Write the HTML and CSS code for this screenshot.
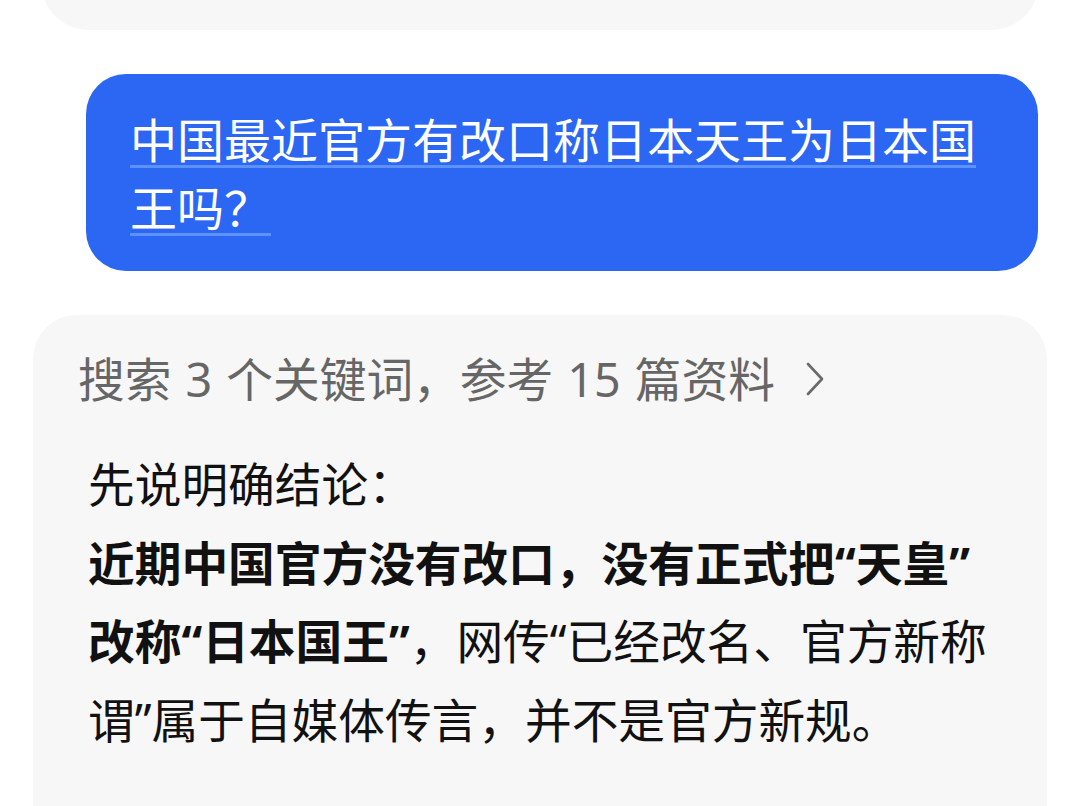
FILE: index.html
```html
<!DOCTYPE html>
<html lang="zh-CN">
<head>
<meta charset="utf-8">
<title>对话</title>
<link rel="stylesheet" href="styles.css">
</head>
<body>
<div class="chat">
  <div class="prev-card"></div>
  <div class="user-row">
    <div class="bubble"><span class="q">中国最近官方有改口称日本天王为日本国王吗？</span></div>
  </div>
  <div class="answer-card">
    <div class="search-row">
      <span class="search-text">搜索 3 个关键词，参考 15 篇资料</span>
      <svg class="chev" width="20" height="34" viewBox="0 0 20 34" aria-hidden="true"><path d="M3 2 L17 17 L3 32" fill="none" stroke="#6a6a6a" stroke-width="2.6" stroke-linecap="round" stroke-linejoin="round"/></svg>
    </div>
    <div class="answer-body">
      <p class="line">先说明确结论：</p>
      <p class="para"><strong>近期中国官方没有改口，没有正式把“天皇”改称“日本国王”</strong>，网传“已经改名、官方新称谓”属于自媒体传言，并不是官方新规。</p>
    </div>
  </div>
</div>
</body>
</html>
```
FILE: styles.css
```css
html, body {
  margin: 0;
  padding: 0;
  background: #ffffff;
  height: 806px;
  overflow: hidden;
}
body {
  font-family: "Noto Sans CJK SC", "Noto Sans", sans-serif;
}
.chat {
  display: flex;
  flex-direction: column;
}
.prev-card {
  margin: -70px 41px 0 41px;
  height: 100px;
  background: #f7f7f7;
  border-radius: 48px;
}
.user-row {
  padding: 44px 42px 0 86px;
}
.bubble {
  background: #2c67f4;
  border-radius: 40px;
  padding: 30px 44px 31px 44px;
  color: #ffffff;
  font-size: 47px;
  line-height: 68px;
}
.q {
  text-decoration-line: underline;
  text-decoration-color: #5d92fa;
  text-decoration-thickness: 3px;
  text-underline-offset: 7px;
}
.answer-card {
  margin: 44px 33px 0 33px;
  background: #f7f7f7;
  border-radius: 44px 44px 0 0;
  padding: 30px 40px 200px 45px;
}
.search-row {
  display: flex;
  align-items: center;
  gap: 30px;
  height: 68px;
  color: #666666;
  font-family: "Noto Sans", "Noto Sans CJK SC", sans-serif;
  font-size: 46.7px;
  line-height: 68px;
  word-spacing: 2px;
}
.chev {
  display: block;
  flex: none;
}
.answer-body {
  margin-top: 32px;
  padding-left: 10px;
  color: #111111;
  font-family: "Noto Sans", "Noto Sans CJK SC", sans-serif;
  font-size: 46.7px;
  line-height: 78.7px;
}
.line, .para {
  margin: 0;
}
.para strong {
  font-weight: 700;
}
```
